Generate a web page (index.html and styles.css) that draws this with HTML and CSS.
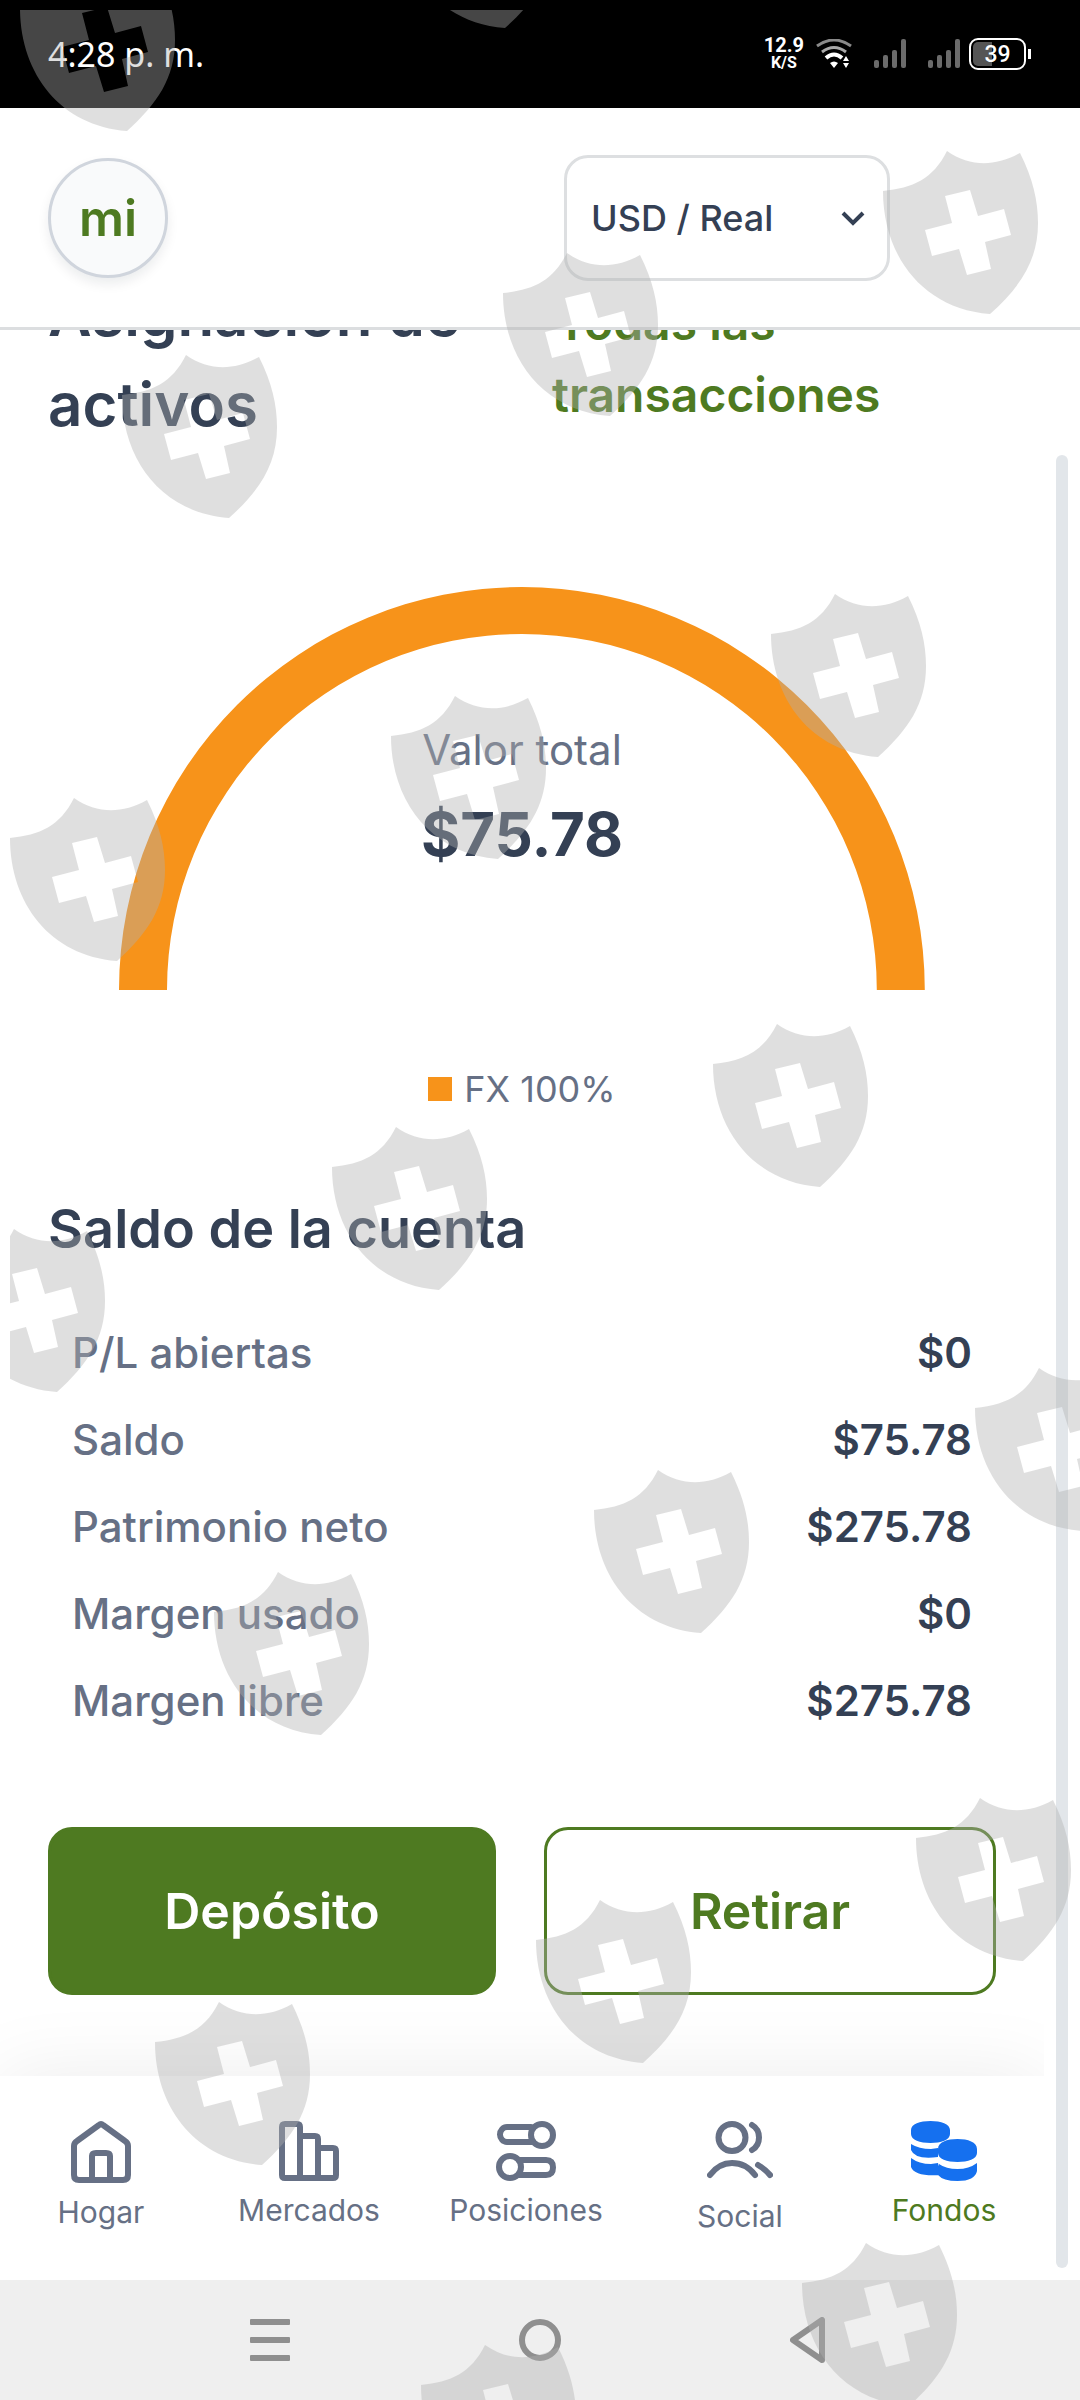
FILE: index.html
```html
<!DOCTYPE html>
<html lang="es">
<head>
    <meta charset="UTF-8">
    <meta name="viewport" content="width=device-width, initial-scale=1.0">
    <title>Fondos</title>
    <link rel="stylesheet" href="styles.css">
</head>
<body>
    <div class="status-bar">
        <span class="time">4:28 p. m.</span>
        <div class="status-icons">
            <div class="speed"><span class="rate">12.9</span><span class="unit">K/S</span></div>
            <svg class="wifi" width="36" height="30" viewBox="0 0 36 30" fill="none">
                <path d="M1 7Q18-5 35 7" stroke="#8a8a8a" stroke-width="3"/>
                <path d="M6 13Q18 4 30 13" stroke="#a8a8a8" stroke-width="3"/>
                <path d="M10 19Q18 12 26 19" stroke="#fff" stroke-width="4"/>
                <path d="M14 24Q18 21 22 24L18 29ZM27 22L30 17L33 22ZM27 24H33L30 29Z" fill="#fff"/>
            </svg>
            <svg class="signal" width="32" height="30" viewBox="0 0 32 30" fill="#6b6b6b">
                <rect y="21" width="5" height="8" rx="2"/><rect x="9" y="16" width="5" height="13" rx="2"/>
                <rect x="18" y="11" width="5" height="18" rx="2"/><rect x="27" width="5" height="29" rx="2"/>
            </svg>
            <svg class="signal" width="32" height="30" viewBox="0 0 32 30" fill="#6b6b6b">
                <rect y="21" width="5" height="8" rx="2"/><rect x="9" y="16" width="5" height="13" rx="2"/>
                <rect x="18" y="11" width="5" height="18" rx="2"/><rect x="27" width="5" height="29" rx="2"/>
            </svg>
            <div class="battery">39</div>
        </div>
    </div>

    <header class="header">
        <button class="avatar" type="button">mi</button>
        <div class="account">
            <select aria-label="Cuenta">
                <option>USD / Real</option>
            </select>
            <svg class="chevron" width="24" height="16" viewBox="0 0 24 16" fill="none" stroke="#344054" stroke-width="4">
                <path d="M2 2L12 12L22 2"/>
            </svg>
        </div>
    </header>

    <div class="screen">
        <div class="page">
            <main class="content">
                <div class="heading">
                    <h1>Asignación de activos</h1>
                    <div class="link-box"><a href="#">Todas las transacciones</a></div>
                </div>

                <div class="chart">
                    <svg class="arc" viewBox="0 0 806 403">
                        <path d="M0 403A403 403 0 0 1 806 403H758A355 356 0 0 0 48 403Z" fill="#f7931a"/>
                    </svg>
                    <div class="total">
                        <span class="total-label">Valor total</span>
                        <span class="total-value">$75.78</span>
                    </div>
                </div>
                <div class="legend"><span class="swatch"></span>FX 100%</div>

                <h2>Saldo de la cuenta</h2>
                <table class="balance">
                    <tr><th scope="row">P/L abiertas</th><td>$0</td></tr>
                    <tr><th scope="row">Saldo</th><td>$75.78</td></tr>
                    <tr><th scope="row">Patrimonio neto</th><td>$275.78</td></tr>
                    <tr><th scope="row">Margen usado</th><td>$0</td></tr>
                    <tr><th scope="row">Margen libre</th><td>$275.78</td></tr>
                </table>

                <div class="actions">
                    <button class="btn btn-fill" type="button">Depósito</button>
                    <button class="btn" type="button">Retirar</button>
                </div>
            </main>

            <nav class="tabs">
                <a href="#">
                    <svg width="60" height="62" viewBox="0 0 60 62">
                        <path d="M3 25Q3 22 6 20L28 4Q30 2 32 4L54 20Q57 22 57 25V54Q57 59 52 59H8Q3 59 3 54ZM21 58V35Q21 32 25 32H35Q39 32 39 35V58"/>
                    </svg>
                    Hogar
                </a>
                <a href="#">
                    <svg width="60" height="60" viewBox="0 0 60 60">
                        <path d="M21 57V6Q21 3 18 3H6Q3 3 3 6V54Q3 57 6 57H54Q57 57 57 54V30Q57 27 54 27H39M39 57V18Q39 15 36 15H21"/>
                    </svg>
                    Mercados
                </a>
                <a href="#">
                    <svg width="60" height="60" viewBox="0 0 60 60">
                        <circle cx="46" cy="14" r="11"/>
                        <path d="M35 6H11A7 7.500 0 0 0 11 21H37"/>
                        <circle cx="14" cy="46" r="11"/>
                        <path d="M23 39H50Q57 39 57 46.500Q57 54 50 54H23"/>
                    </svg>
                    Posiciones
                </a>
                <a href="#">
                    <svg width="66" height="66" viewBox="0 0 66 66">
                        <circle cx="25" cy="16.500" r="13.500"/>
                        <path d="M3 54Q12 42 25 42Q39 42 48 54M45 4Q52 8 52 16.500Q52 25 45 29M51 44Q58 48 63 54"/>
                    </svg>
                    Social
                </a>
                <a href="#" class="active">
                    <svg width="66" height="60" viewBox="0 0 66 60">
                        <path d="M0 9C0 3 9 0 19.500 0S39 3 39 9V13C39 19 30 22 19.500 22S0 19 0 13ZM0 23Q8 28 20 28L27 27V36Q4 39 0 29ZM0 37Q8 43 20 43L27 42L30 54Q4 56 0 46ZM27 28C27 21 36 18 46.500 18S66 21 66 28V32C66 38 57 41 46.500 41S27 38 27 32ZM28 43Q35 48 46.500 48Q58 48 66 42V50Q64 60 46.500 60Q32 60 27 54Z"/>
                    </svg>
                    Fondos
                </a>
            </nav>
        </div>
        <div class="scroll-track"></div>
    </div>

    <div class="system-nav">
        <button type="button" aria-label="Recientes">
            <svg width="40" height="44" viewBox="0 0 40 44" fill="#8f8f8f">
                <rect y="1" width="40" height="6" rx="1"/><rect y="19" width="40" height="6" rx="1"/><rect y="37" width="40" height="6" rx="1"/>
            </svg>
        </button>
        <button type="button" aria-label="Inicio">
            <svg width="42" height="42" viewBox="0 0 42 42" fill="none" stroke="#8f8f8f" stroke-width="6">
                <circle cx="21" cy="21" r="18"/>
            </svg>
        </button>
        <button type="button" aria-label="Atrás">
            <svg width="40" height="46" viewBox="0 0 40 46" fill="none" stroke="#8f8f8f" stroke-width="6" stroke-linejoin="round">
                <path d="M3 23L32 3V43Z"/>
            </svg>
        </button>
    </div>

    <!-- shields scattered over the whole screen -->
    <svg class="shields" aria-hidden="true">
        <defs>
            <path id="shield" fill-rule="evenodd" d="M0 40C30 37 50 28 64 0C87 16 112 16 137 2C150 28 155 50 155 72C155 110 137 136 107 163C40 158 0 105 0 40ZM62 45L87 39L95 65L121 58L128 84L102 91L108 118L84 124L76 98L49 105L42 79L69 72Z"/>
        </defs>
        <use href="#shield" x="10" y="-42"/>
        <use href="#shield" x="388" y="-145"/>
        <use href="#shield" x="873" y="141"/>
        <use href="#shield" x="493" y="243"/>
        <use href="#shield" x="112" y="345"/>
        <use href="#shield" x="761" y="584"/>
        <use href="#shield" x="381" y="686"/>
        <use href="#shield" x="0" y="788"/>
        <use href="#shield" x="703" y="1014"/>
        <use href="#shield" x="322" y="1117"/>
        <use href="#shield" x="-60" y="1219"/>
        <use href="#shield" x="965" y="1358"/>
        <use href="#shield" x="584" y="1460"/>
        <use href="#shield" x="204" y="1562"/>
        <use href="#shield" x="906" y="1788"/>
        <use href="#shield" x="526" y="1890"/>
        <use href="#shield" x="145" y="1992"/>
        <use href="#shield" x="792" y="2233"/>
        <use href="#shield" x="411" y="2335"/>
    </svg>
</body>
</html>
```
FILE: styles.css
```css
* {
    box-sizing: border-box;
}
body {
    position: relative;
    display: flex;
    flex-direction: column;
    min-height: 100vh;
    margin: 0;
    font-family: Inter, "Liberation Sans", sans-serif;
    color: #344054;
    background-color: #fff;
}
button, select {
    font-family: inherit;
    color: inherit;
}
svg {
    display: block;
}

/* status bar */
.status-bar {
    display: flex;
    align-items: center;
    justify-content: space-between;
    height: 108px;
    padding: 0 54px 0 48px;
    background-color: #000;
    color: #fff;
}
.time {
    font-family: "Noto Sans", sans-serif;
    font-size: 34px;
}
.status-icons {
    display: flex;
    align-items: center;
    font-family: Roboto, sans-serif;
    font-weight: 500;
}
.speed {
    display: flex;
    flex-direction: column;
    align-items: center;
    font-weight: 700;
    line-height: 18px;
}
.rate {
    font-size: 20px;
}
.unit {
    font-size: 16px;
}
.wifi {
    margin-left: 12px;
}
.signal {
    margin-left: 22px;
}
.battery {
    position: relative;
    width: 57px;
    height: 32px;
    margin-left: 9px;
    border: 2px solid #fff;
    border-radius: 9px;
    background: linear-gradient(90deg, #555 39%, #000 39%) content-box;
    padding: 2px;
    font-size: 23px;
    line-height: 25px;
    text-align: center;
}
.battery::after {
    content: "";
    position: absolute;
    top: 9px;
    right: -7px;
    width: 3px;
    height: 10px;
    background-color: #fff;
}

/* header */
.header {
    display: flex;
    align-items: center;
    justify-content: space-between;
    height: 222px;
    padding: 0 190px 0 48px;
    border-bottom: 3px solid #dcdee0;
}
.avatar {
    width: 120px;
    height: 120px;
    border: 3px solid #d0d5dd;
    border-radius: 50%;
    background-color: #f9fafb;
    box-shadow: 0 6px 12px rgba(16, 24, 40, 0.08);
    color: #4e7a21;
    font-size: 50px;
    font-weight: 600;
}
.account {
    position: relative;
    width: 326px;
}
.account select {
    width: 100%;
    height: 126px;
    padding: 0 24px;
    border: 3px solid #dddfe1;
    border-radius: 24px;
    background-color: #fff;
    font-size: 36px;
    font-weight: 500;
    appearance: none;
}
.chevron {
    position: absolute;
    top: 56px;
    right: 25px;
    pointer-events: none;
}

/* scrolled page */
.screen {
    position: relative;
    display: flex;
    flex: 1;
    padding-right: 36px;
}
.page {
    display: flex;
    flex: 1;
    flex-direction: column;
    overflow: hidden;
}
.content {
    flex: 1;
    padding: 0 48px 80px;
    margin-top: -61px;
}
.scroll-track {
    position: absolute;
    top: 125px;
    right: 12px;
    bottom: 12px;
    width: 12px;
    border-radius: 6px;
    background-color: #e2e6ea;
}
.heading {
    display: grid;
    grid-template-columns: 504fr 444fr;
    align-items: center;
}
h1 {
    margin: 0;
    font-size: 60px;
    font-weight: 600;
    line-height: 90px;
}
.link-box {
    font-size: 48px;
    font-weight: 600;
    line-height: 72px;
}
.link-box a {
    padding: 0 4px;
    color: #4e7a21;
    text-decoration: none;
}
.chart {
    display: grid;
    justify-items: center;
    margin-top: 138px;
}
.arc, .total {
    grid-area: 1 / 1;
}
.arc {
    width: 85%;
}
.total {
    display: flex;
    flex-direction: column;
    align-items: center;
    gap: 12px;
    margin-top: 133px;
}
.total-label {
    color: #667085;
    font-size: 42px;
    line-height: 60px;
}
.total-value {
    font-size: 60px;
    font-weight: 700;
    line-height: 84px;
}
.legend {
    display: flex;
    align-items: center;
    justify-content: center;
    gap: 12px;
    margin-top: 72px;
    color: #667085;
    font-size: 36px;
    line-height: 54px;
}
.swatch {
    width: 24px;
    height: 24px;
    background-color: #f7931a;
}
h2 {
    margin: 74px 0 41px;
    font-size: 54px;
    font-weight: 600;
    line-height: 78px;
}
.balance {
    width: 100%;
    border-collapse: collapse;
    font-size: 42px;
    line-height: 87px;
}
.balance th {
    padding: 0 24px;
    color: #667085;
    font-weight: 500;
    text-align: left;
}
.balance td {
    padding: 0 24px;
    font-weight: 600;
    text-align: right;
}
.actions {
    display: grid;
    grid-template-columns: 448fr 452fr;
    gap: 48px;
    margin-top: 83px;
}
.btn {
    height: 168px;
    border: 3px solid #4e7a21;
    border-radius: 24px;
    background-color: transparent;
    color: #4e7a21;
    font-size: 50px;
    font-weight: 600;
}
.btn-fill {
    background-color: #4e7a21;
    color: #fff;
}

/* bottom tabs */
.tabs {
    display: grid;
    grid-template-columns: 202fr 214fr 220fr 208fr 200fr;
    height: 204px;
    padding-top: 45px;
    background-color: #fff;
    box-shadow: 0 0 80px rgba(0, 0, 0, 0.08);
}
.tabs a {
    display: flex;
    flex-direction: column;
    align-items: center;
    gap: 8px;
    color: #667085;
    font-size: 30px;
    line-height: 42px;
    text-decoration: none;
}
.tabs svg {
    fill: none;
    stroke: #667085;
    stroke-width: 6;
    stroke-linecap: round;
    stroke-linejoin: round;
}
.tabs .active {
    color: #4e7a21;
}
.tabs .active svg {
    fill: #1570ef;
    stroke: none;
}

/* system navigation */
.system-nav {
    display: grid;
    grid-template-columns: repeat(3, 1fr);
    height: 120px;
    padding: 0 12.5%;
    background-color: #efefef;
}
.system-nav button {
    display: flex;
    align-items: center;
    justify-content: center;
    padding: 0;
    border: 0;
    background: none;
}

.shields {
    position: absolute;
    top: 10px;
    left: 10px;
    width: calc(100% - 10px);
    height: calc(100% - 10px);
    fill: #b0b0b0;
    opacity: 0.4;
    pointer-events: none;
}
```
